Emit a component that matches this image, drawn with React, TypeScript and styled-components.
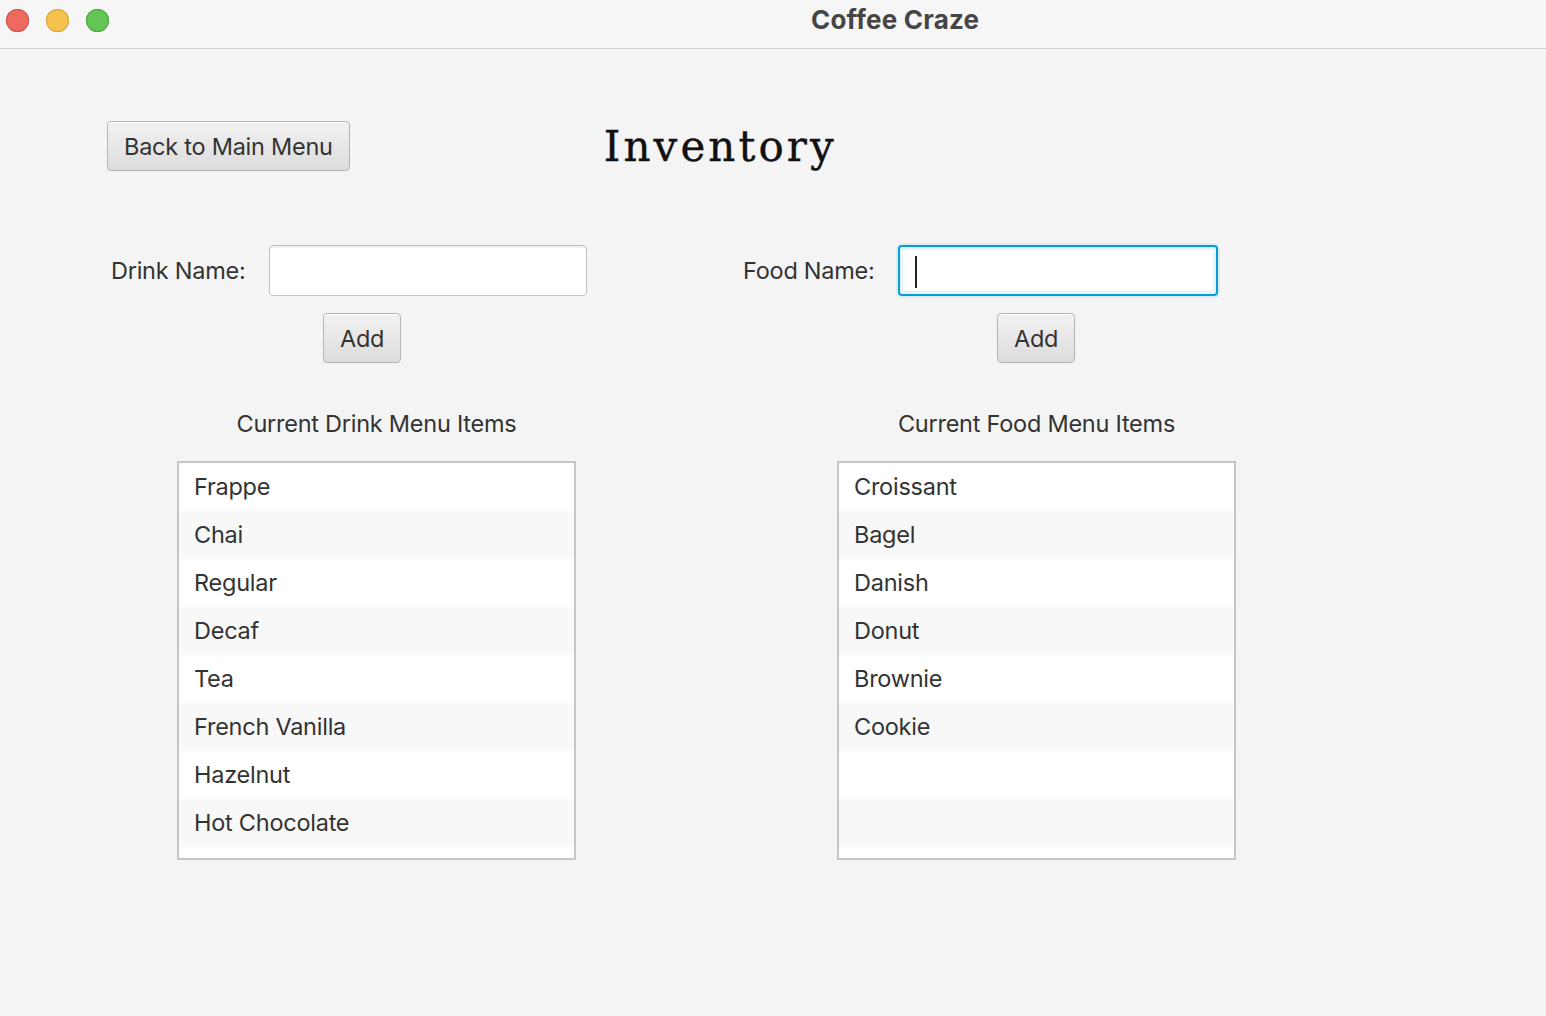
import styled, { createGlobalStyle } from "styled-components"

const GlobalStyle = createGlobalStyle`
  html, body {
    margin: 0;
    padding: 0;
    background: #f4f4f4;
    font-family: Inter, "Noto Sans", sans-serif;
    letter-spacing: -0.25px;
    color: #333333;
  }
`

const Window = styled.div`
  width: 1546px;
  height: 1016px;
  display: flex;
  flex-direction: column;
  background: #f4f4f4;
  overflow: hidden;
`

const TitleBar = styled.div`
  height: 48px;
  flex-shrink: 0;
  display: flex;
  align-items: center;
  padding-left: 6px;
  background: #f6f6f6;
  border-bottom: 1px solid #d0d0d0;
`

const Light = styled.span<{ $fill: string; $edge: string }>`
  width: 23px;
  height: 23px;
  border-radius: 50%;
  background: ${(p) => p.$fill};
  box-shadow: inset 0 0 0 1px ${(p) => p.$edge};
  margin-right: 17px;
  margin-top: -8px;
`

const WindowTitle = styled.div`
  margin-left: 685px;
  margin-top: -10px;
  font-size: 26px;
  font-weight: 700;
  letter-spacing: 0.2px;
  color: #454545;
`

const Content = styled.div`
  display: flex;
  flex-direction: column;
  padding-top: 72px;
`

const HeaderRow = styled.div`
  display: flex;
  align-items: center;
  height: 50px;
  padding-left: 107px;
`

const Button = styled.button<{ $offset?: number }>`
  height: 50px;
  padding: 0 16px;
  margin-left: ${(p) => p.$offset ?? 0}px;
  border: 1.5px solid #b4b4b4;
  border-radius: 4px;
  background: linear-gradient(#f2f2f2, #dcdcdc);
  box-shadow: inset 0 1px 0 #ffffff;
  font-family: Inter, "Noto Sans", sans-serif;
  font-size: 23.5px;
  letter-spacing: -0.25px;
  color: #333333;
  cursor: pointer;
`

const PageTitle = styled.h1`
  margin: 2px 0 0 254px;
  line-height: 48px;
  font-family: "DejaVu Serif", "Liberation Serif", serif;
  font-size: 42px;
  font-weight: 400;
  color: #111111;
  -webkit-text-stroke: 0.4px #111111;
  letter-spacing: 3.1px;
`

const FormRow = styled.div`
  display: flex;
  margin-top: 74px;
`

const FormGroup = styled.div<{ $left: number }>`
  display: flex;
  flex-direction: column;
  margin-left: ${(p) => p.$left}px;
`

const FieldLine = styled.div`
  display: flex;
  align-items: center;
`

const Label = styled.label<{ $width: number }>`
  width: ${(p) => p.$width}px;
  font-size: 23.5px;
  color: #333333;
`

const Input = styled.div<{ $width: number; $focused?: boolean }>`
  position: relative;
  box-sizing: border-box;
  width: ${(p) => p.$width}px;
  height: 51px;
  background: #ffffff;
  border-radius: 4px;
  border: ${(p) => (p.$focused ? "2px solid #0a9bd2" : "1.5px solid #c2c2c2")};
  box-shadow: ${(p) =>
    p.$focused
      ? "0 0 0 2px #d7eef8, inset 0 0 0 3px #e4f4fb"
      : "inset 0 2px 2px rgba(0,0,0,0.06)"};
`

const Caret = styled.span`
  position: absolute;
  left: 15px;
  top: 9px;
  width: 2px;
  height: 32px;
  background: #222222;
`

const ButtonLine = styled.div`
  display: flex;
  margin-top: 17px;
`

const ListsRow = styled.div`
  display: flex;
  margin-top: 46px;
`

const ListColumn = styled.div<{ $left: number }>`
  display: flex;
  flex-direction: column;
  align-items: center;
  width: 399px;
  margin-left: ${(p) => p.$left}px;
`

const ListHeading = styled.div`
  font-size: 23.5px;
  color: #333333;
  height: 30px;
  line-height: 30px;
`

const ListBox = styled.ul`
  box-sizing: border-box;
  width: 399px;
  height: 399px;
  margin: 22px 0 0;
  padding: 0;
  list-style: none;
  background: #ffffff;
  border: 2px solid #c6c6c6;
  overflow: hidden;
`

const ListItem = styled.li<{ $odd: boolean }>`
  height: 48px;
  line-height: 48px;
  padding-left: 15px;
  font-size: 23.5px;
  color: #333333;
  background: ${(p) => (p.$odd ? "#f8f8f8" : "#ffffff")};
`

const drinks = ["Frappe", "Chai", "Regular", "Decaf", "Tea", "French Vanilla", "Hazelnut", "Hot Chocolate"]
const foods = ["Croissant", "Bagel", "Danish", "Donut", "Brownie", "Cookie", "", ""]

const MenuList = ({ title, items, left }: { title: string; items: string[]; left: number }) => (
  <ListColumn $left={left}>
    <ListHeading>{title}</ListHeading>
    <ListBox>
      {items.map((item, i) => (
        <ListItem key={i} $odd={i % 2 === 1}>
          {item}
        </ListItem>
      ))}
    </ListBox>
  </ListColumn>
)

export default function App() {
  return (
    <>
      <GlobalStyle />
      <Window>
        <TitleBar>
          <Light $fill="#ee6a5f" $edge="#d5544a" />
          <Light $fill="#f5c350" $edge="#d9a53a" />
          <Light $fill="#62c554" $edge="#4fa941" />
          <WindowTitle>Coffee Craze</WindowTitle>
        </TitleBar>
        <Content>
          <HeaderRow>
            <Button>Back to Main Menu</Button>
            <PageTitle>Inventory</PageTitle>
          </HeaderRow>
          <FormRow>
            <FormGroup $left={111}>
              <FieldLine>
                <Label $width={158}>Drink Name:</Label>
                <Input $width={318} />
              </FieldLine>
              <ButtonLine>
                <Button $offset={212}>Add</Button>
              </ButtonLine>
            </FormGroup>
            <FormGroup $left={156}>
              <FieldLine>
                <Label $width={155}>Food Name:</Label>
                <Input $width={320} $focused>
                  <Caret />
                </Input>
              </FieldLine>
              <ButtonLine>
                <Button $offset={254}>Add</Button>
              </ButtonLine>
            </FormGroup>
          </FormRow>
          <ListsRow>
            <MenuList title="Current Drink Menu Items" items={drinks} left={177} />
            <MenuList title="Current Food Menu Items" items={foods} left={261} />
          </ListsRow>
        </Content>
      </Window>
    </>
  )
}
